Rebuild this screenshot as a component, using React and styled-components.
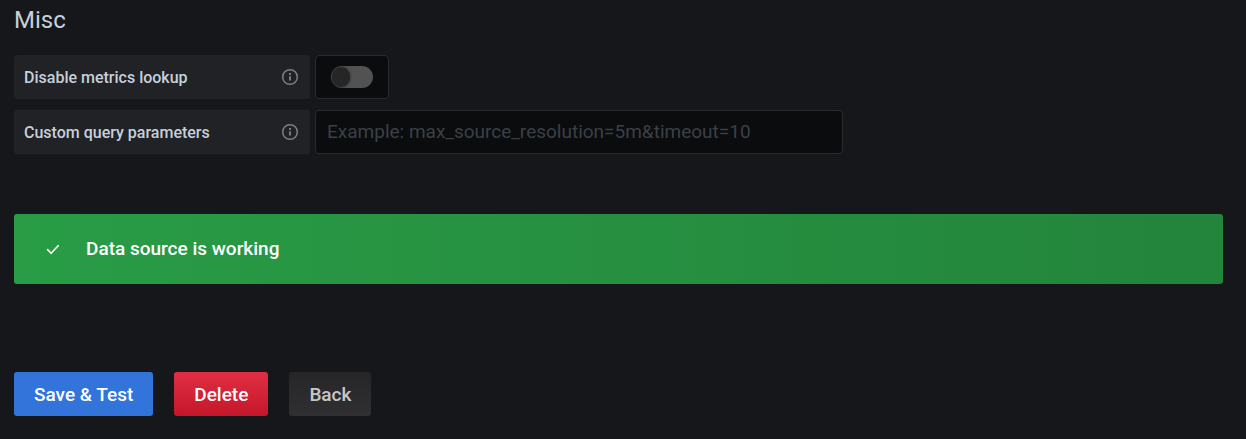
import React, { useState } from "react";
import styled, { createGlobalStyle } from "styled-components";

const Global = createGlobalStyle`
  *, *::before, *::after { box-sizing: border-box; }
  body {
    margin: 0;
    background: #16171a;
    color: #c7d0d9;
    font-family: Roboto, "Liberation Sans", sans-serif;
  }
`;

const Page = styled.main`
  padding: 4px 23px 23px 14px;
`;

const Title = styled.h3`
  margin: 0 0 19px;
  font-size: 24px;
  line-height: 32px;
  font-weight: 400;
`;

const Fields = styled.div`
  display: flex;
  flex-direction: column;
  gap: 11px;
`;

const Field = styled.div`
  display: flex;
  gap: 5px;
`;

const FieldLabel = styled.label`
  flex: 0 0 296px;
  height: 44px;
  padding: 0 11px 0 10px;
  display: flex;
  align-items: center;
  justify-content: space-between;
  border-radius: 3px;
  background: #202226;
  font-size: 16px;
  font-weight: 500;
`;

const SwitchBox = styled.div`
  width: 74px;
  height: 44px;
  display: flex;
  align-items: center;
  justify-content: center;
  border: 1px solid #2a2b2e;
  border-radius: 4px;
  background: #0b0c0e;
`;

const Switch = styled.input`
  appearance: none;
  width: 42px;
  height: 22px;
  margin: 0;
  padding: 1px;
  display: flex;
  border-radius: 11px;
  background: #525252;
  cursor: pointer;

  &::before {
    content: "";
    width: 18px;
    height: 20px;
    border-radius: 10px;
    background: #262626;
    box-shadow: 0 0 3px #262626;
  }

  &:checked {
    justify-content: flex-end;
    background: #3274d9;
  }
`;

const TextInput = styled.input`
  flex: 0 1 528px;
  min-width: 0;
  height: 44px;
  padding: 0 11px 2px;
  border: 1px solid #2a2b2e;
  border-radius: 4px;
  background: #0b0c0e;
  color: #c7d0d9;
  font-family: inherit;
  font-size: 19px;

  &::placeholder {
    color: #3a4046;
    opacity: 1;
  }
`;

const Alert = styled.div`
  height: 70px;
  margin: 60px 0 88px;
  padding: 0 30px;
  display: flex;
  align-items: center;
  gap: 24px;
  border-radius: 3px;
  background: linear-gradient(90deg, #299c46, #23843b);
  color: #fff;
  font-size: 19px;
  line-height: 24px;
  font-weight: 500;
`;

const Actions = styled.div`
  display: flex;
  gap: 21px;
`;

const tones = {
  primary: "background: #3274d9; color: #fff;",
  danger: "background: linear-gradient(#e02f44, #c4162a); color: #fff;",
  inverse: "background: linear-gradient(#262628, #303032); color: #c7c7c8;",
};

const Button = styled.button`
  height: 44px;
  padding: 0 20px;
  border: 0;
  border-radius: 3px;
  font-family: inherit;
  font-size: 19px;
  font-weight: 500;
  cursor: pointer;
  ${({ $tone }) => tones[$tone]}
`;

const InfoIcon = () => (
  <svg width="18" height="18" viewBox="0 0 18 18" fill="none" stroke="#7b8087" aria-hidden="true">
    <circle cx="9" cy="9" r="7.3" strokeWidth="1.5" />
    <path d="M9 8.2v4.3" strokeWidth="1.9" />
    <path d="M9 5v2" strokeWidth="1.9" />
  </svg>
);

const CheckIcon = () => (
  <svg width="18" height="18" viewBox="0 0 18 18" fill="none" stroke="#fff" aria-hidden="true">
    <path d="M3.6 9.6l3.5 3.7 7.1-7.6" strokeWidth="1.6" strokeLinecap="round" strokeLinejoin="round" />
  </svg>
);

export default function App() {
  const [disabled, setDisabled] = useState(false);
  const [params, setParams] = useState("");

  return (
    <>
      <Global />
      <Page>
        <Title>Misc</Title>
        <Fields>
          <Field>
            <FieldLabel htmlFor="lookup">
              Disable metrics lookup
              <InfoIcon />
            </FieldLabel>
            <SwitchBox>
              <Switch
                id="lookup"
                type="checkbox"
                checked={disabled}
                onChange={(e) => setDisabled(e.target.checked)}
              />
            </SwitchBox>
          </Field>
          <Field>
            <FieldLabel htmlFor="params">
              Custom query parameters
              <InfoIcon />
            </FieldLabel>
            <TextInput
              id="params"
              type="text"
              value={params}
              onChange={(e) => setParams(e.target.value)}
              placeholder="Example: max_source_resolution=5m&timeout=10"
            />
          </Field>
        </Fields>
        <Alert role="status">
          <CheckIcon />
          Data source is working
        </Alert>
        <Actions>
          <Button type="button" $tone="primary">Save &amp; Test</Button>
          <Button type="button" $tone="danger">Delete</Button>
          <Button type="button" $tone="inverse">Back</Button>
        </Actions>
      </Page>
    </>
  );
}
